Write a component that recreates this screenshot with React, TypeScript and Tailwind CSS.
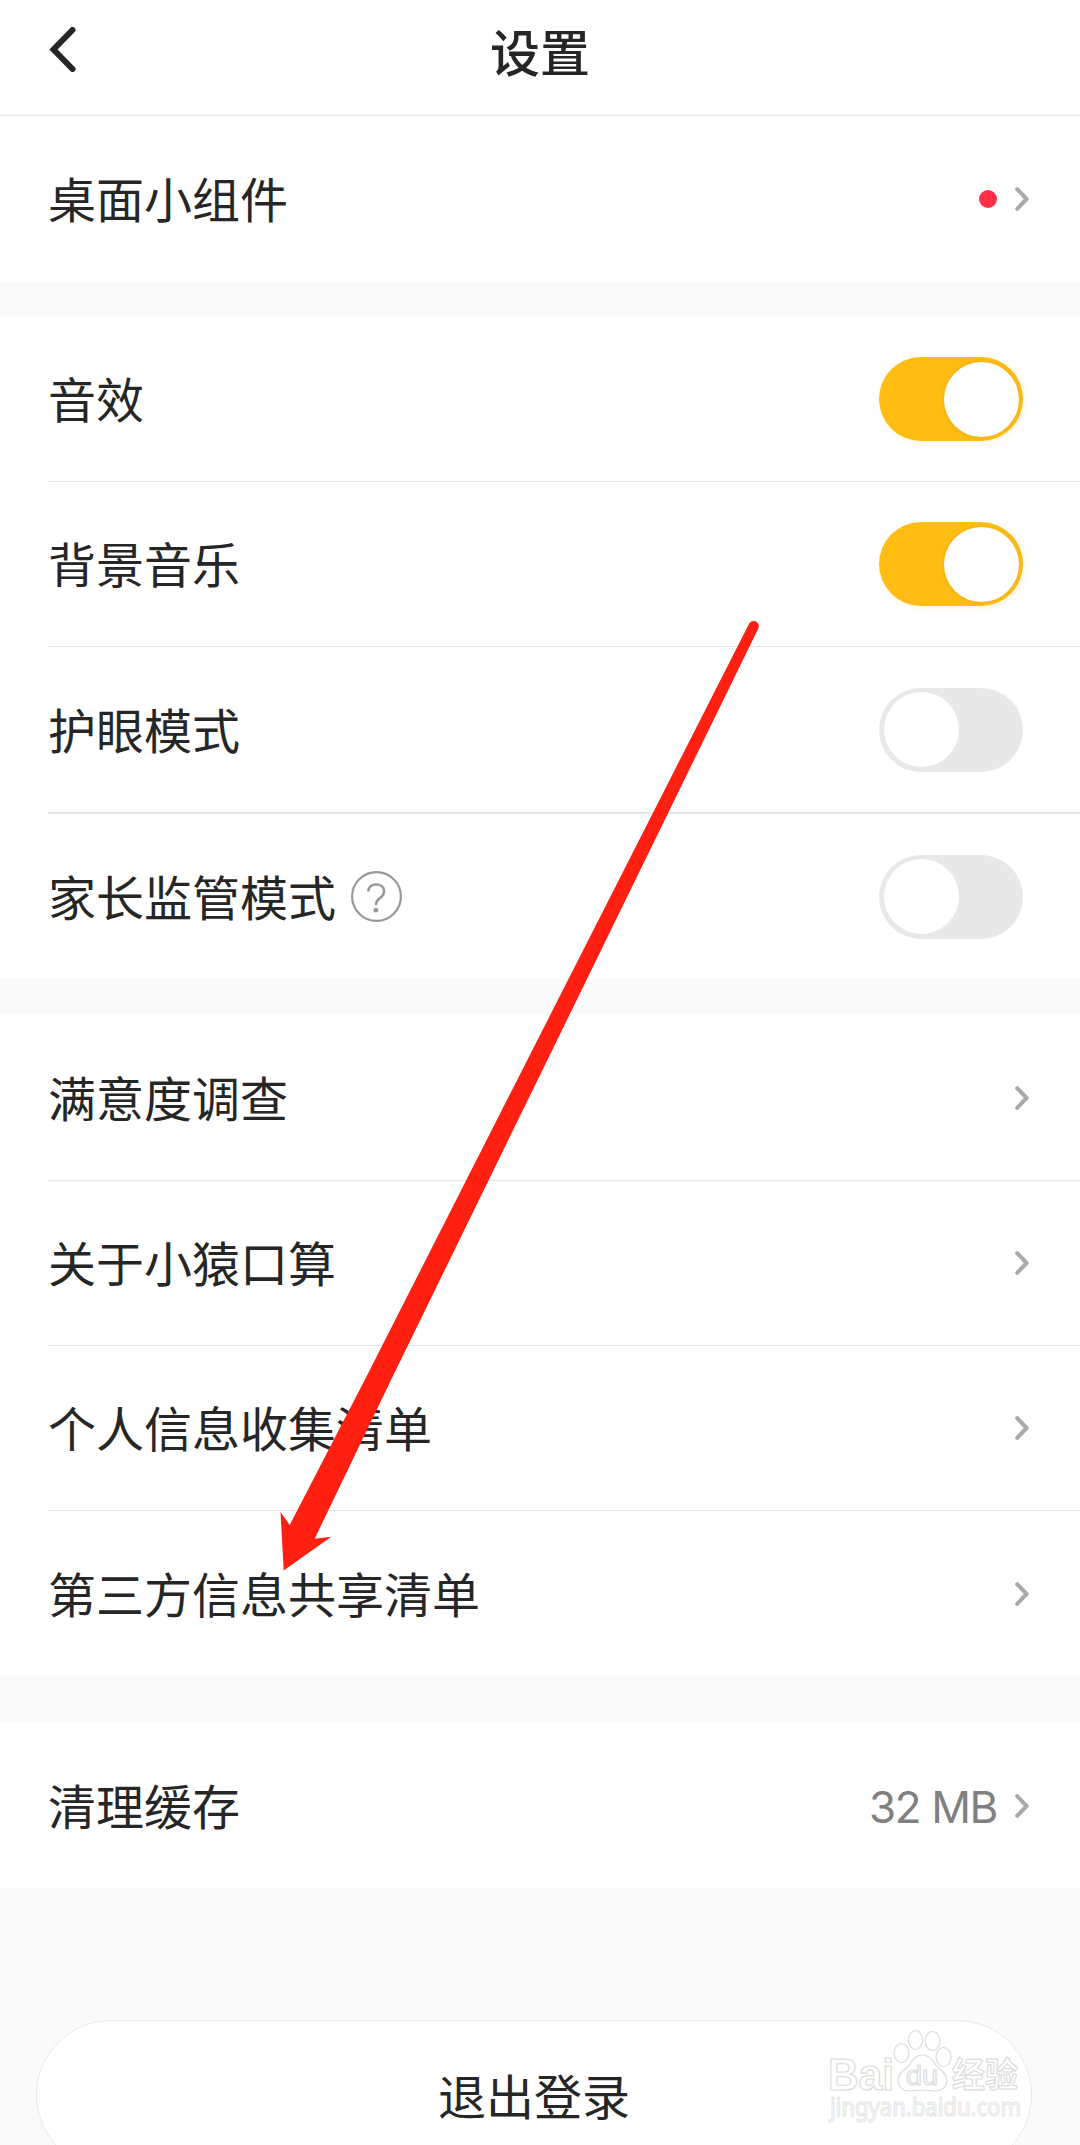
import type { ReactNode } from 'react';
import { useState } from 'react';
import cls from 'clsx';

type SwitchProps = {
  label: string;
  on: boolean;
  onToggle: () => void;
};

type RowProps = {
  label: string;
  border?: 'thin' | 'thick';
  icon?: ReactNode;
  children?: ReactNode;
};

const Switch = ({ label, on, onToggle }: SwitchProps) => {
  return (
    <button
      role="switch"
      aria-checked={on}
      aria-label={label}
      onClick={onToggle}
      className={cls(
        'mr-1.5 flex h-[84px] w-36 items-center rounded-full px-[4.5px]',
        on
          ? 'justify-end bg-[#ffbd14] shadow-[2px_2px_6px_rgba(255,189,20,0.15)]'
          : 'justify-start bg-[#e8e8e8]',
      )}
    >
      <span
        className={cls(
          'size-[75px] rounded-full bg-white',
          on && 'shadow-[0_0_5px_rgba(215,140,30,0.4)]',
        )}
      />
    </button>
  );
};

const ChevronRight = () => (
  <svg className="h-6 w-[14px]" viewBox="0 0 14 24" fill="none">
    <path
      d="M2.2 2.2 11.6 12 2.2 21.8"
      stroke="#a9a9a9"
      strokeWidth="4"
      strokeLinecap="round"
      strokeLinejoin="round"
    />
  </svg>
);

const HelpIcon = () => (
  <svg className="size-[51px]" viewBox="0 0 51 51" fill="none">
    <circle cx="25.5" cy="25.5" r="24.4" stroke="#999" strokeWidth="2.2" />
    <path
      d="M17.2 20.5c.3-4.4 3.6-7 8-7 4.6 0 7.9 2.700 7.9 6.8 0 3.2-1.6 4.9-4.3 7-2.7 2-3.7 3.300-3.7 6v.9"
      stroke="#999"
      strokeWidth="2.6"
    />
    <circle cx="24.9" cy="39.2" r="2.4" fill="#999" />
  </svg>
);

const Row = ({ label, border, icon, children }: RowProps) => {
  return (
    <div
      className={cls(
        'ml-12 flex items-center justify-between border-[#e6e6e6] pr-[51px]',
        border === 'thick' ? 'h-[167px] border-b-2' : 'h-[165px]',
        border === 'thin' && 'border-b',
      )}
    >
      <div className="flex items-center gap-[15px]">
        <span className="pb-1 text-5xl/[72px]">{label}</span>
        {icon}
      </div>
      <div className="flex items-center">{children}</div>
    </div>
  );
};

const Watermark = () => (
  <svg
    className="absolute top-0 right-0.5 h-[120px] w-[210px]"
    viewBox="0 0 210 120"
    fill="#fff"
    stroke="#dcdcdc"
    strokeWidth="1.2"
  >
    <g fontFamily='"Liberation Sans", "Noto Sans CJK SC", sans-serif'>
      <text x="8" y="70" fontSize="44" fontWeight="700" textLength="66" lengthAdjust="spacingAndGlyphs">
        Bai
      </text>
      <ellipse cx="81.5" cy="33" rx="7.5" ry="9.5" />
      <ellipse cx="95.5" cy="20" rx="7" ry="9.5" />
      <ellipse cx="112.5" cy="21" rx="7.5" ry="9.5" />
      <ellipse cx="123.5" cy="37" rx="7.5" ry="9.5" />
      <path d="M102 35c-6 0-9 4-12 9s-12 8-12 16c0 7 5 11 11 11 5 0 8-1 13-1s8 1 13 1c7 0 12-4 12-11 0-8-9-11-12-16s-7-9-13-9Z" />
      <text x="86" y="65" fontSize="27" textLength="32" lengthAdjust="spacingAndGlyphs">
        du
      </text>
      <text x="132" y="67" fontSize="34" fontWeight="700" textLength="66" lengthAdjust="spacingAndGlyphs">
        经验
      </text>
    </g>
    <text
      x="10"
      y="95.5"
      fontSize="25"
      fontFamily='"Noto Sans", sans-serif'
      textLength="191"
      lengthAdjust="spacingAndGlyphs"
      stroke="#e6e6e6"
    >
      jingyan.baidu.com
    </text>
  </svg>
);

const Arrow = () => (
  <svg
    className="pointer-events-none absolute top-[600px] left-[260px] h-[990px] w-[520px]"
    viewBox="260 600 520 990"
    fill="#ff2012"
  >
    <path d="M749.2 623.5 364.7 1380 289.7 1525 280.5 1512 283.7 1570.5 331.3 1536.7 314.7 1538.7 391 1380 758.4 628.3A5.2 5.2 0 0 0 749.2 623.5Z" />
  </svg>
);

const App = () => {
  const [settings, setSettings] = useState({
    sound: true,
    music: true,
    eyeCare: false,
    parental: false,
  });

  const toggle = (key: keyof typeof settings) =>
    setSettings((prev) => ({ ...prev, [key]: !prev[key] }));

  return (
    <div className="relative h-[2145px] w-[1080px] overflow-hidden bg-[#fafafa] font-['Noto_Sans_CJK_SC',sans-serif] text-[#262626]">
      <header className="grid h-[116px] grid-cols-[1fr_auto_1fr] items-center border-b border-[#e6e6e6] bg-white pb-4">
        <button aria-label="返回" className="ml-[49px] w-fit">
          <svg className="h-[45px] w-[27px]" viewBox="0 0 27 45" fill="none">
            <path
              d="M23.5 3 4.5 22.5 23.5 42"
              stroke="#262626"
              strokeWidth="6"
              strokeLinecap="round"
              strokeLinejoin="miter"
            />
          </svg>
        </button>
        <h1 className="text-[50px]/[72px] font-medium">设置</h1>
      </header>

      <section className="bg-white">
        <Row label="桌面小组件">
          <span className="mr-[18px] size-[18px] rounded-full bg-[#ff3048]" />
          <ChevronRight />
        </Row>
      </section>

      <section className="mt-[35px] bg-white pt-px">
        <Row label="音效" border="thin">
          <Switch label="音效" on={settings.sound} onToggle={() => toggle('sound')} />
        </Row>
        <Row label="背景音乐" border="thin">
          <Switch label="背景音乐" on={settings.music} onToggle={() => toggle('music')} />
        </Row>
        <Row label="护眼模式" border="thick">
          <Switch label="护眼模式" on={settings.eyeCare} onToggle={() => toggle('eyeCare')} />
        </Row>
        <Row label="家长监管模式" icon={<HelpIcon />}>
          <Switch label="家长监管模式" on={settings.parental} onToggle={() => toggle('parental')} />
        </Row>
      </section>

      <section className="mt-9 bg-white pt-px">
        <Row label="满意度调查" border="thin">
          <ChevronRight />
        </Row>
        <Row label="关于小猿口算" border="thin">
          <ChevronRight />
        </Row>
        <Row label="个人信息收集清单" border="thin">
          <ChevronRight />
        </Row>
        <Row label="第三方信息共享清单">
          <ChevronRight />
        </Row>
      </section>

      <section className="mt-[47px] bg-white">
        <Row label="清理缓存">
          <span className="mr-[18px] pt-0.5 font-['Inter',sans-serif] text-[44px]/[60px] tracking-[-1.4px] text-[#808080]">
            32 MB
          </span>
          <ChevronRight />
        </Row>
      </section>

      <div className="relative mt-[132px] mr-12 ml-9">
        <button className="h-[150px] w-full rounded-full border border-[#e8e8e8] bg-white pb-0.5 text-5xl/[72px]">
          退出登录
        </button>
        <Watermark />
      </div>

      <Arrow />
    </div>
  );
};

export default App;
